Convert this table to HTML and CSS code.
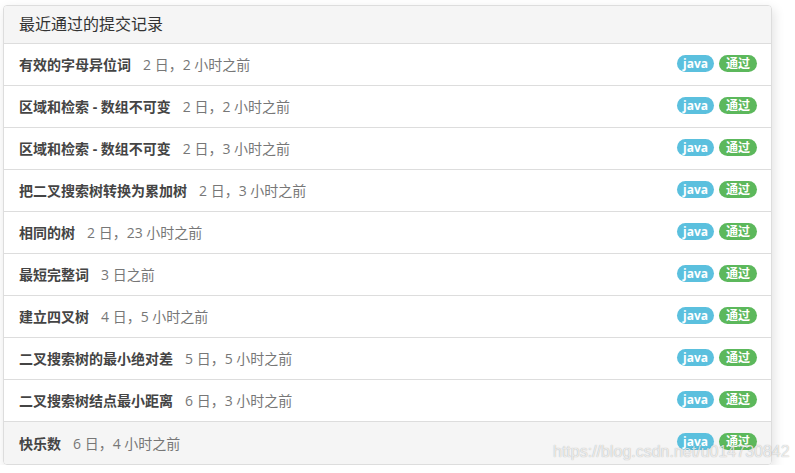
FILE: index.html
```html
<!DOCTYPE html>
<html lang="zh-CN">
<head>
	<meta charset="UTF-8">
	<title>最近通过的提交记录</title>
	<link rel="stylesheet" href="styles.css">
</head>
<body>
	<div class="panel">
		<div class="panel-heading">最近通过的提交记录</div>
		<ul class="list">
			<li class="item"><span class="title">有效的字母异位词</span><span class="time">2 日，2 小时之前</span><span class="badges"><i class="badge info">java</i><i class="badge ok">通过</i></span></li>
			<li class="item"><span class="title">区域和检索 - 数组不可变</span><span class="time">2 日，2 小时之前</span><span class="badges"><i class="badge info">java</i><i class="badge ok">通过</i></span></li>
			<li class="item"><span class="title">区域和检索 - 数组不可变</span><span class="time">2 日，3 小时之前</span><span class="badges"><i class="badge info">java</i><i class="badge ok">通过</i></span></li>
			<li class="item"><span class="title">把二叉搜索树转换为累加树</span><span class="time">2 日，3 小时之前</span><span class="badges"><i class="badge info">java</i><i class="badge ok">通过</i></span></li>
			<li class="item"><span class="title">相同的树</span><span class="time">2 日，23 小时之前</span><span class="badges"><i class="badge info">java</i><i class="badge ok">通过</i></span></li>
			<li class="item"><span class="title">最短完整词</span><span class="time">3 日之前</span><span class="badges"><i class="badge info">java</i><i class="badge ok">通过</i></span></li>
			<li class="item"><span class="title">建立四叉树</span><span class="time">4 日，5 小时之前</span><span class="badges"><i class="badge info">java</i><i class="badge ok">通过</i></span></li>
			<li class="item"><span class="title">二叉搜索树的最小绝对差</span><span class="time">5 日，5 小时之前</span><span class="badges"><i class="badge info">java</i><i class="badge ok">通过</i></span></li>
			<li class="item"><span class="title">二叉搜索树结点最小距离</span><span class="time">6 日，3 小时之前</span><span class="badges"><i class="badge info">java</i><i class="badge ok">通过</i></span></li>
			<li class="item hover"><span class="title">快乐数</span><span class="time">6 日，4 小时之前</span><span class="badges"><i class="badge info">java</i><i class="badge ok">通过</i></span></li>
		</ul>
	</div>
	<div class="watermark">https://blog.csdn.net/u014730842</div>
</body>
</html>
```
FILE: styles.css
```css
body {
	margin: 0;
	background: #fff;
	font-family: "Open Sans", "Noto Sans CJK SC", sans-serif;
	color: #333;
}

/*面板*/
.panel {
	width: 767px;
	margin: 5px 0 0 3px;
	border: 1px solid #ddd;
	border-radius: 4px;
	box-shadow: 2px 4px 12px rgba(0, 0, 0, .12);
	overflow: hidden;
}
.panel-heading {
	height: 37px;
	line-height: 37px;
	padding-left: 15px;
	font-size: 16px;
	background-color: #f5f5f5;
	border-bottom: 1px solid #ddd;
}

/*列表*/
.list {
	margin: 0;
	padding: 0;
	list-style: none;
}
.item {
	display: flex;
	align-items: center;
	height: 41px;
	padding: 0 14px 1px 15px;
	border-bottom: 1px solid #ddd;
	font-size: 14px;
	box-sizing: border-box;
	height: 42px;
}
.item:last-child {
	border-bottom: none;
}
.item.hover {
	background-color: #f5f5f5;
}
.title {
	font-weight: bold;
	color: #444;
}
.time {
	margin-left: 12px;
	color: #777;
}
.badges {
	display: flex;
	gap: 5px;
	margin-left: auto;
	margin-bottom: 2px;
}
.badge {
	height: 17px;
	line-height: 17px;
	padding: 0 6px;
	border-radius: 9px;
	font-style: normal;
	font-size: 12px;
	font-weight: bold;
	color: #fff;
}
.info {
	background-color: #5bc0de;
}
.ok {
	padding: 0 7px;
	background-color: #5cb85c;
}

/*水印*/
.watermark {
	position: absolute;
	left: 553px;
	top: 443px;
	font-family: "Liberation Sans", sans-serif;
	font-size: 16px;
	color: rgba(255, 255, 255, .75);
	text-shadow: 0 0 1px rgba(0, 0, 0, .35);
}
```
